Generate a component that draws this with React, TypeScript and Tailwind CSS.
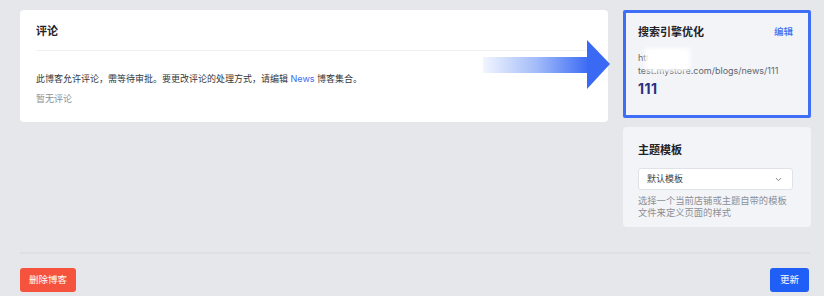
import React from 'react';
import { ChevronDown } from 'lucide-react';

const font = "font-['Inter','Noto_Sans_CJK_SC',sans-serif]";

function Arrow() {
  return (
    <svg
      className="absolute left-[483px] top-[40px]"
      width="128"
      height="50"
      viewBox="0 0 128 50"
    >
      <defs>
        <linearGradient id="shaft" x1="0" y1="0" x2="1" y2="0">
          <stop offset="0" stopColor="#f1f5fe" />
          <stop offset="0.5" stopColor="#a4bdf9" />
          <stop offset="1" stopColor="#3d6cf4" />
        </linearGradient>
      </defs>
      <rect x="0" y="17" width="105" height="16" fill="url(#shaft)" />
      <polygon points="104,0 127,24 104,49" fill="#3a6af4" />
    </svg>
  );
}

export default function App() {
  return (
    <div className={`${font} relative w-[824px] h-[296px] bg-[#e5e7eb] overflow-hidden`}>
      <div className="flex gap-[15px] pl-[20px] pr-[13px] pt-[10px]">
        {/* comments */}
        <div className="flex-1 h-[112px] bg-white rounded-[4px] pl-[16px] pr-[8px] pt-[13px]">
          <div className="text-[11px] leading-[16px] font-semibold text-[#1f2329]">评论</div>
          <div className="mt-[11px] h-px bg-[#eef0f3]" />
          <p className="mt-[22px] text-[9px] leading-[12px] text-[#33373d]">
            此博客允许评论，需等待审批。要更改评论的处理方式，请编辑{' '}
            <span className="text-[#3d6cf0]">News</span> 博客集合。
          </p>
          <p className="mt-[8px] text-[9px] leading-[12px] text-[#8a8f98]">暂无评论</p>
        </div>

        <div className="w-[188px] flex flex-col gap-[9px]">
          {/* seo */}
          <div className="relative h-[108px] bg-[#f2f4f8] border-[3px] border-[#3d6ef5] rounded-[2px] pl-[12px] pr-[15px] pt-[11px]">
            <div className="flex items-center justify-between">
              <span className="text-[11px] leading-[16px] font-semibold text-[#1f2329]">搜索引擎优化</span>
              <span className="text-[9.5px] leading-[16px] font-medium text-[#3d6ef0]">编辑</span>
            </div>
            <div className="mt-[11px] text-[9px] leading-[13px] text-[#62666e]">
              <div>https://:/.//</div>
              <div>test.mystore.com/blogs/news/111</div>
            </div>
            <div className="mt-[3px] text-[14px] leading-[18px] font-bold text-[#2b307e] tracking-[0.5px]">111</div>
            <div className="absolute left-[19px] top-[35px] w-[45px] h-[23px] bg-white blur-[2px]" />
          </div>

          {/* template */}
          <div className="h-[100px] bg-[#f3f4f7] rounded-[4px] pl-[15px] pr-[15px] pt-[15px]">
            <div className="text-[11px] leading-[16px] font-semibold text-[#1f2329]">主题模板</div>
            <div className="mt-[10px] w-[155px] h-[22px] bg-white border border-[#dfe2e7] rounded-[3px] flex items-center justify-between pl-[8px] pr-[9px]">
              <span className="text-[9px] text-[#3a3e45]">默认模板</span>
              <ChevronDown size={9} strokeWidth={2} className="text-[#555a62]" />
            </div>
            <p className="mt-[5px] w-[152px] text-[9.3px] leading-[11.5px] text-[#8a8f98]">
              选择一个当前店铺或主题自带的模板文件来定义页面的样式
            </p>
          </div>
        </div>
      </div>

      <div className="ml-[20px] mr-[14px] mt-[25px] h-[2px] bg-[#dcdfe4]" />

      <div className="flex justify-between pl-[20px] pr-[15px] mt-[14px]">
        <button className="h-[24px] px-[9px] rounded-[3px] bg-[#f6533f] text-white text-[9.5px]">删除博客</button>
        <button className="h-[24px] px-[10px] rounded-[3px] bg-[#1f5ff5] text-white text-[9.5px]">更新</button>
      </div>

      <Arrow />
    </div>
  );
}
